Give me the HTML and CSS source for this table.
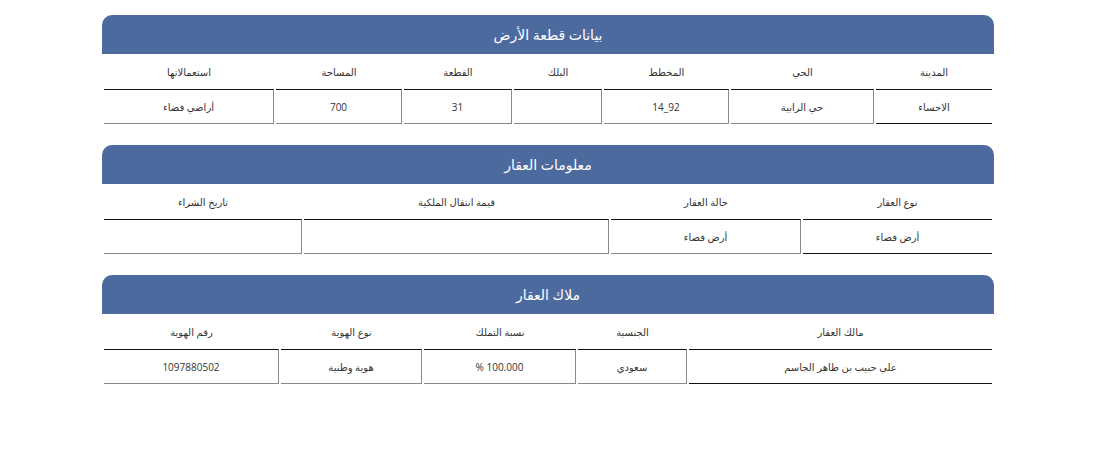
FILE: index.html
```html
<!DOCTYPE html>
<html lang="ar" dir="rtl">
<head>
<meta charset="utf-8">
<link rel="stylesheet" href="styles.css">
</head>
<body>
<div class="page">
  <section class="panel">
    <h2 class="panel-title">بيانات قطعة الأرض</h2>
    <table class="info">
      <colgroup>
        <col class="w116"><col class="w143"><col class="w125"><col class="w88"><col class="w108"><col class="w126"><col>
      </colgroup>
      <thead>
        <tr><th>المدينة</th><th>الحي</th><th>المخطط</th><th>البلك</th><th>القطعة</th><th>المساحة</th><th>استعمالاتها</th></tr>
      </thead>
      <tbody>
        <tr><td>الاحساء</td><td>حي الرابية</td><td>92_14</td><td></td><td>31</td><td>700</td><td>أراضي فضاء</td></tr>
      </tbody>
    </table>
  </section>

  <section class="panel">
    <h2 class="panel-title">معلومات العقار</h2>
    <table class="info">
      <colgroup>
        <col class="w189"><col class="w190"><col class="w305"><col>
      </colgroup>
      <thead>
        <tr><th>نوع العقار</th><th>حالة العقار</th><th>قيمة انتقال الملكية</th><th>تاريخ الشراء</th></tr>
      </thead>
      <tbody>
        <tr><td>أرض فضاء</td><td>أرض فضاء</td><td></td><td></td></tr>
      </tbody>
    </table>
  </section>

  <section class="panel">
    <h2 class="panel-title">ملاك العقار</h2>
    <table class="info">
      <colgroup>
        <col class="w303"><col class="w109"><col class="w152"><col class="w141"><col>
      </colgroup>
      <thead>
        <tr><th>مالك العقار</th><th>الجنسية</th><th>نسبة التملك</th><th>نوع الهوية</th><th>رقم الهوية</th></tr>
      </thead>
      <tbody>
        <tr><td>علي حبيب بن طاهر الجاسم</td><td>سعودي</td><td>100.000 %</td><td>هوية وطنية</td><td>1097880502</td></tr>
      </tbody>
    </table>
  </section>
</div>
</body>
</html>
```

FILE: styles.css
```css
html, body {
  margin: 0;
  padding: 0;
  background: #ffffff;
}

body {
  font-family: "Open Sans", "DejaVu Sans", sans-serif;
  color: #333333;
}

.page {
  width: 892px;
  margin-left: 102px;
  margin-right: auto;
  padding-top: 15px;
  display: flex;
  flex-direction: column;
  gap: 21px;
}

.panel-title {
  margin: 0;
  height: 39px;
  line-height: 39px;
  background: #4d6a9f;
  color: #ffffff;
  font-size: 14px;
  font-weight: normal;
  text-align: center;
  border-radius: 10px 10px 0 0;
}

.info {
  width: 100%;
  border-collapse: separate;
  border-spacing: 2px 0;
  table-layout: fixed;
  font-size: 10px;
}

.info th {
  font-weight: normal;
  height: 35px;
  padding: 0;
  text-align: center;
  vertical-align: middle;
  color: #333333;
}

.info td {
  height: 33px;
  padding: 0;
  text-align: center;
  vertical-align: middle;
  border-top: 1px solid #111111;
  border-bottom: 1px solid #8a8a8a;
  border-right: 1px solid #8a8a8a;
}

.info td:first-child {
  border-right: none;
  border-bottom-color: #111111;
}

.w116 { width: 116px; }
.w143 { width: 143px; }
.w125 { width: 125px; }
.w88 { width: 88px; }
.w108 { width: 108px; }
.w126 { width: 126px; }
.w189 { width: 189px; }
.w190 { width: 190px; }
.w305 { width: 305px; }
.w303 { width: 303px; }
.w109 { width: 109px; }
.w152 { width: 152px; }
.w141 { width: 141px; }
```
